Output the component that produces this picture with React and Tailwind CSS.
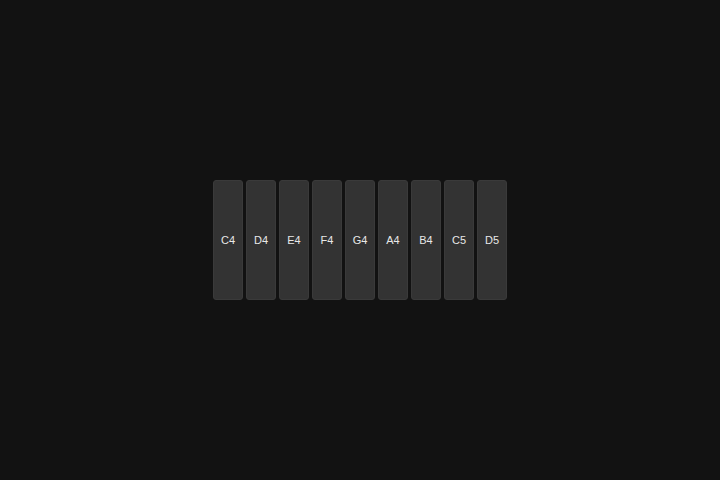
const notes = ["C4", "D4", "E4", "F4", "G4", "A4", "B4", "C5", "D5"];

export default function App() {
  return (
    <div
      className="w-full h-screen bg-[#121212] flex items-center justify-center"
      style={{ fontFamily: "'Liberation Sans', Arial, sans-serif" }}
    >
      <div className="flex gap-[3px]">
        {notes.map((note) => (
          <button
            key={note}
            className="w-[30px] h-[120px] rounded-[3px] bg-[#333333] border border-[#3a3a3a] flex items-center justify-center text-[11px] text-[#e8e8e8]"
          >
            {note}
          </button>
        ))}
      </div>
    </div>
  );
}
